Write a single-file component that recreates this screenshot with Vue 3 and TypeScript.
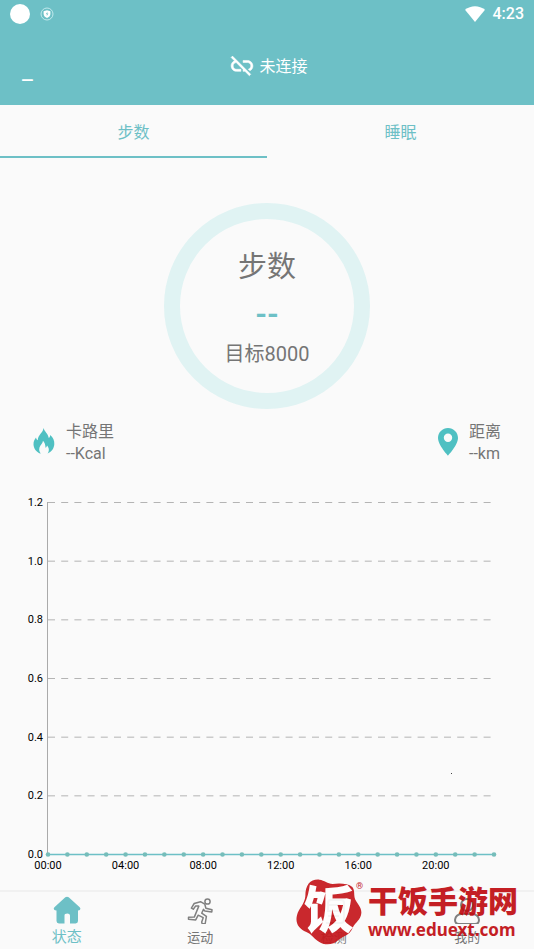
<script setup lang="ts">
import { ref } from 'vue'

type Panel = 'steps' | 'sleep'
const panel = ref<Panel>('steps')

const plot = { left: 48, right: 494, top: 12, bottom: 364 }
const ticks = ['1.2', '1.0', '0.8', '0.6', '0.4', '0.2', '0.0'].map((label, i) => ({
  label,
  y: plot.top + ((plot.bottom - plot.top) * i) / 6,
}))
const points = Array.from({ length: 24 }, (_, hour) => ({
  hour,
  x: plot.left + ((plot.right - plot.left) * hour) / 23,
}))
const hours = points.filter((p) => p.hour % 4 === 0)
const hourLabel = (hour: number): string => `${String(hour).padStart(2, '0')}:00`
</script>

<template>
  <div class="screen">
    <header class="header">
      <div class="status">
        <div class="status-side">
          <span class="status-dot"></span>
          <svg class="shield" viewBox="0 0 14 14" aria-hidden="true">
            <circle cx="7" cy="7" r="6" fill="none" stroke="#c9edf0" stroke-width="0.9" />
            <path d="M7 3.2 10.4 4.3V7C10.4 8.9 8.9 10.2 7 11 5.1 10.2 3.6 8.9 3.6 7V4.3Z" fill="#fff" />
            <path d="M7.6 4.6 5.8 7.2H7.1L6.6 9.2 8.4 6.5H7.1Z" fill="#6dc0c6" />
          </svg>
        </div>
        <div class="status-side status-right">
          <svg class="wifi" viewBox="0 0 20 16" aria-hidden="true">
            <path d="M0 3.8C5.8-1 14.2-1 20 3.8L10 16Z" fill="#fff" />
          </svg>
          <span class="clock">4:23</span>
        </div>
      </div>
      <div class="connection">
        <button class="menu" type="button">_</button>
        <button class="link-state" type="button">
          <svg class="link-icon" viewBox="1 3 22 20" aria-hidden="true">
            <path
              d="M17 7h-4v1.9h4c1.71 0 3.1 1.39 3.1 3.1 0 1.43-.98 2.63-2.31 2.98l1.46 1.46C20.88 15.61 22 13.95 22 12c0-2.76-2.24-5-5-5zM2 4.27l3.11 3.11C3.29 8.12 2 9.91 2 12c0 2.76 2.24 5 5 5h4v-1.9H7c-1.71 0-3.1-1.39-3.1-3.1 0-1.59 1.21-2.9 2.76-3.07L13 15.27V17h1.73l4.01 4L20 19.74 3.27 3 2 4.27z"
              fill="#fff"
              stroke="#fff"
              stroke-width="0.5"
            />
          </svg>
          <span>未连接</span>
        </button>
      </div>
    </header>

    <nav class="tabs">
      <button class="tab" :class="{ active: panel === 'steps' }" type="button" @click="panel = 'steps'">步数</button>
      <button class="tab" :class="{ active: panel === 'sleep' }" type="button" @click="panel = 'sleep'">睡眠</button>
    </nav>

    <main class="content">
      <section class="ring">
        <h1 class="ring-title">步数</h1>
        <strong class="ring-value">--</strong>
        <span class="ring-goal">目标8000</span>
      </section>

      <section class="metrics">
        <div class="metric">
          <svg class="flame" viewBox="0 0 22 26" aria-hidden="true">
            <path
              d="M10.5 0C11.5 3.5 15 5.6 15.8 10 16.8 9.2 17.1 8.3 17.2 7 20.2 9.5 21.6 12.8 21.3 16.2 21 20.6 18.4 23.8 14.6 25.5 16.8 22.3 15.8 19.4 14 17.4 13.8 18.6 13.2 19.4 12.5 19.8 12.5 16.8 11.7 14.5 10 12.7 9.6 15.6 7.3 17 6.5 19.5 5.8 21.8 6.4 23.9 7.8 25.6 3.6 24.4.7 20.6.5 16.4.4 13.5 1.6 11.4 3 9.5 3.3 11 3.9 11.8 4.8 12.3 4.8 6.7 9.8 5.5 10.5 0Z"
              fill="#4fc0c2"
            />
          </svg>
          <div class="metric-text"><span>卡路里</span><span>--Kcal</span></div>
        </div>
        <div class="metric">
          <svg class="pin" viewBox="0 0 20 28" aria-hidden="true">
            <path
              d="M10 0C4.5 0 0 4.4 0 9.9 0 17 10 27.5 10 27.5S20 17 20 9.9C20 4.4 15.5 0 10 0ZM10 5.6A4.2 4.2 0 1 1 10 14 4.2 4.2 0 0 1 10 5.6Z"
              fill="#4fc0c2"
              fill-rule="evenodd"
            />
          </svg>
          <div class="metric-text"><span>距离</span><span>--km</span></div>
        </div>
      </section>

      <svg class="chart" viewBox="0 0 534 388" role="img">
        <g v-for="tick in ticks" :key="tick.label">
          <line class="grid" :x1="plot.left" :x2="plot.right" :y1="tick.y + 0.5" :y2="tick.y + 0.5" />
          <text class="axis-text" x="43" :y="tick.y + 4" text-anchor="end">{{ tick.label }}</text>
        </g>
        <line class="axis" x1="47.5" x2="47.5" :y1="plot.top" :y2="plot.bottom" />
        <line class="series" :x1="plot.left" :x2="plot.right" :y1="plot.bottom + 0.5" :y2="plot.bottom + 0.5" />
        <circle v-for="p in points" :key="p.hour" class="point" :cx="p.x" :cy="plot.bottom + 0.5" r="2.3" />
        <text v-for="p in hours" :key="p.hour" class="axis-text" :x="p.x" y="379" text-anchor="middle">{{ hourLabel(p.hour) }}</text>
        <rect x="451" y="283" width="1" height="1" fill="#444" />
      </svg>
    </main>

    <footer class="footer">
      <nav class="bottom-nav">
        <a class="nav-item current" href="#status">
          <svg class="nav-icon" viewBox="0 0 28 28" aria-hidden="true">
            <path
              d="M12.3 1.3Q14 .1 15.7 1.3L26.7 11.2Q28 12.6 27 13.8 26.5 14.4 25 14.4V25Q25 27.4 22.6 27.4H17V19.5Q17 17.6 14.3 17.6 11.5 17.6 11.5 19.5V27.4H6Q3.5 27.4 3.5 25V14.4Q1.8 14.4 1.2 13.8.1 12.6 1.4 11.2Z"
              fill="#6dc0c6"
            />
          </svg>
          <span>状态</span>
        </a>
        <a class="nav-item" href="#sport">
          <svg class="nav-icon" viewBox="0 0 28 28" aria-hidden="true">
            <g fill="none" stroke="#808080" stroke-width="1.5" stroke-linejoin="round">
              <circle cx="21.5" cy="5.5" r="2.6" />
              <path
                d="M8.2 7.5 14.5 5.7 18.8 8.2 19.9 12.3 26 13.7 25.8 16 18.9 15 17.5 13.4 15.7 17.2 20.4 20.3 19.2 27.5 16.2 28 15.7 26 17.2 21.7 12.2 19.2 9.7 23.9 2.5 23.3 2.5 21.2 8.3 21.1 12.8 10.1 9.7 9.9 7.3 13.2 5.4 12.1Z"
              />
            </g>
          </svg>
          <span>运动</span>
        </a>
        <a class="nav-item" href="#measure">
          <svg class="nav-icon" viewBox="0 0 28 28" aria-hidden="true">
            <g fill="none" stroke="#808080" stroke-width="2">
              <path d="M8 13V7Q8 4 11 4H21Q24 4 24 7V24Q24 27 21 27H6" />
              <path d="M8 9H18Q20 9 20 11V15H8ZM8 20H19" />
            </g>
          </svg>
          <span>检测</span>
        </a>
        <a class="nav-item" href="#mine">
          <svg class="nav-icon" viewBox="0 0 28 28" aria-hidden="true">
            <g fill="none" stroke="#808080" stroke-width="2">
              <circle cx="14" cy="9" r="6" />
              <path d="M8 18H20C27 19 28 28 22 28H6C0 28 1 19 8 18Z" />
            </g>
          </svg>
          <span>我的</span>
        </a>
      </nav>

      <div class="brand">
        <div class="brand-mark">
          <svg class="brand-blob" viewBox="12 12 198 198" aria-hidden="true">
            <path
              d="M40 64C40 28 56 12 82 14 98 16 106 26 122 27 142 24 168 25 181 36 190 48 184 60 190 74 197 88 209 96 208 114 207 134 190 142 182 158 172 182 155 182 140 194 126 210 98 212 82 201 66 192 60 178 43 171 20 162 9 144 15 121 20 100 38 88 40 64Z"
              fill="#c5171c"
            />
          </svg>
          <span class="brand-glyph">饭</span>
          <span class="brand-reg">®</span>
        </div>
        <div class="brand-text">
          <strong class="brand-name">干饭手游网</strong>
          <strong class="brand-url">www.eduext.com</strong>
        </div>
      </div>
    </footer>
  </div>
</template>

<style>
body {
  margin: 0;
  background: #fafafa;
}
</style>

<style scoped>
.screen {
  display: flex;
  flex-direction: column;
  min-height: 100vh;
  background: #fafafa;
  color: #757575;
  font-family: Roboto, 'Noto Sans CJK SC', sans-serif;
}

button {
  padding: 0;
  border: 0;
  background: none;
  color: inherit;
  font: inherit;
  cursor: pointer;
}

.header {
  height: 105px;
  background: #6dc0c6;
  color: #fff;
}

.status {
  display: flex;
  justify-content: space-between;
  align-items: center;
  height: 28px;
  padding: 0 10px;
}

.status-side {
  display: flex;
  align-items: center;
  gap: 10px;
}

.status-right {
  gap: 8px;
}

.status-dot {
  width: 20px;
  height: 20px;
  border-radius: 50%;
  background: #fff;
}

.shield {
  width: 14px;
  height: 14px;
}

.wifi {
  width: 20px;
  height: 16px;
}

.clock {
  font-size: 16px;
  font-weight: 500;
  line-height: 28px;
}

.connection {
  display: grid;
  grid-template-columns: 1fr auto 1fr;
  align-items: start;
  padding: 27px 18px 0 22px;
}

.menu {
  justify-self: start;
  font-size: 24px;
  line-height: 32px;
}

.link-state {
  display: flex;
  align-items: center;
  gap: 5px;
  font-size: 16px;
  line-height: 24px;
}

.link-icon {
  width: 24px;
  height: 22px;
}

.tabs {
  display: flex;
}

.tab {
  flex: 1;
  height: 53px;
  border-bottom: 2px solid transparent;
  color: #6dc0c6;
  font-size: 16px;
}

.tab.active {
  border-bottom-color: #6dc0c6;
}

.content {
  flex: 1;
}

.ring {
  display: flex;
  flex-direction: column;
  align-items: center;
  box-sizing: border-box;
  width: 206px;
  height: 206px;
  margin: 45px auto 0;
  padding-top: 26px;
  border: 16px solid #e0f3f3;
  border-radius: 50%;
}

.ring-title {
  margin: 0;
  font-size: 29px;
  font-weight: 400;
  line-height: 44px;
}

.ring-value {
  color: #6dc0c6;
  font-size: 30px;
  line-height: 49px;
}

.ring-goal {
  font-size: 20px;
  line-height: 32px;
}

.metrics {
  display: flex;
  justify-content: space-between;
  padding: 12px 33px 0;
}

.metric {
  display: flex;
  align-items: flex-start;
  gap: 11px;
}

.metric-text {
  display: flex;
  flex-direction: column;
  font-size: 16px;
  line-height: 22px;
}

.flame,
.pin {
  margin-top: 7px;
}

.flame {
  width: 22px;
  height: 26px;
}

.pin {
  width: 20px;
  height: 28px;
}

.chart {
  display: block;
  width: 100%;
  margin-top: 25px;
}

.grid {
  stroke: #b4b4b4;
  stroke-width: 1;
  stroke-dasharray: 7 6.2;
}

.axis {
  stroke: #aaa;
}

.series {
  stroke: #6dc0c6;
  stroke-width: 1.4;
}

.point {
  fill: #76bdba;
}

.axis-text {
  fill: #000;
  font-size: 11px;
}

.footer {
  position: relative;
  border-top: 2px solid #f1f1f1;
}

.bottom-nav {
  display: flex;
}

.nav-item {
  display: flex;
  flex: 1;
  flex-direction: column;
  align-items: center;
  height: 57px;
  padding-top: 4px;
  box-sizing: border-box;
  color: #757575;
  font-size: 13px;
  line-height: 27px;
  text-decoration: none;
}

.nav-item.current {
  color: #6dc0c6;
  font-size: 15px;
}

.nav-icon {
  flex-shrink: 0;
  width: 28px;
  height: 28px;
}

.brand {
  position: absolute;
  right: 16px;
  bottom: 4px;
  display: flex;
  align-items: center;
  gap: 6px;
  color: #c00d12;
  opacity: 0.92;
}

.brand-mark {
  position: relative;
  width: 66px;
  height: 66px;
}

.brand-blob {
  display: block;
  width: 66px;
  height: 66px;
}

.brand-glyph {
  position: absolute;
  top: 7px;
  left: 8px;
  color: #fff;
  font-size: 50px;
  font-weight: 900;
  line-height: 50px;
}

.brand-reg {
  position: absolute;
  top: 1px;
  right: -1px;
  font-size: 9px;
  line-height: 12px;
}

.brand-text {
  display: flex;
  flex-direction: column;
}

.brand-name {
  font-size: 30px;
  font-weight: 900;
  line-height: 36px;
}

.brand-url {
  font-family: 'Noto Sans', 'Open Sans', sans-serif;
  font-size: 17px;
  line-height: 20px;
}
</style>
